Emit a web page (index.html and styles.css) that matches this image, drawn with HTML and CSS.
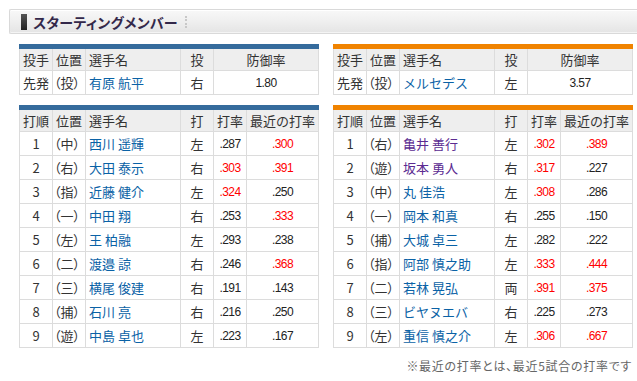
FILE: index.html
```html
<!DOCTYPE html>
<html lang="ja">
<head>
<meta charset="utf-8">
<title>スターティングメンバー</title>
<link rel="stylesheet" href="styles.css">
</head>
<body>
<div class="page">
  <div class="title-bar">
    <span class="title-mark"></span>
    <h2 class="title">スターティングメンバー</h2>
    <span class="title-sep"></span>
  </div>

  <div class="columns">
    <div class="team">
      <table class="tbl tbl-home">
        <colgroup><col class="c33"><col class="c33"><col class="c95"><col class="c33"><col class="c105"></colgroup>
        <tr class="head"><th>投手</th><th>位置</th><th>選手名</th><th class="ctr">投</th><th class="ctr">防御率</th></tr>
        <tr><td>先発</td><td class="pos">（投）</td><td><a class="name">有原 航平</a></td><td class="ctr">右</td><td class="num">1.80</td></tr>
      </table>

      <table class="tbl tbl-home">
        <colgroup><col class="c33"><col class="c33"><col class="c95"><col class="c33"><col class="c33"><col class="c72"></colgroup>
        <tr class="head"><th>打順</th><th>位置</th><th>選手名</th><th class="ctr">打</th><th class="ctr">打率</th><th class="ctr">最近の打率</th></tr>
        <tr><td class="ctr">1</td><td class="pos">（中）</td><td><a class="name">西川 遥輝</a></td><td class="ctr">左</td><td class="num">.287</td><td class="num hot">.300</td></tr>
        <tr><td class="ctr">2</td><td class="pos">（右）</td><td><a class="name">大田 泰示</a></td><td class="ctr">右</td><td class="num hot">.303</td><td class="num hot">.391</td></tr>
        <tr><td class="ctr">3</td><td class="pos">（指）</td><td><a class="name">近藤 健介</a></td><td class="ctr">左</td><td class="num hot">.324</td><td class="num">.250</td></tr>
        <tr><td class="ctr">4</td><td class="pos">（一）</td><td><a class="name">中田 翔</a></td><td class="ctr">右</td><td class="num">.253</td><td class="num hot">.333</td></tr>
        <tr><td class="ctr">5</td><td class="pos">（左）</td><td><a class="name">王 柏融</a></td><td class="ctr">左</td><td class="num">.293</td><td class="num">.238</td></tr>
        <tr><td class="ctr">6</td><td class="pos">（二）</td><td><a class="name">渡邉 諒</a></td><td class="ctr">右</td><td class="num">.246</td><td class="num hot">.368</td></tr>
        <tr><td class="ctr">7</td><td class="pos">（三）</td><td><a class="name">横尾 俊建</a></td><td class="ctr">右</td><td class="num">.191</td><td class="num">.143</td></tr>
        <tr><td class="ctr">8</td><td class="pos">（捕）</td><td><a class="name">石川 亮</a></td><td class="ctr">右</td><td class="num">.216</td><td class="num">.250</td></tr>
        <tr><td class="ctr">9</td><td class="pos">（遊）</td><td><a class="name">中島 卓也</a></td><td class="ctr">左</td><td class="num">.223</td><td class="num">.167</td></tr>
      </table>
    </div>

    <div class="team">
      <table class="tbl tbl-away">
        <colgroup><col class="c33"><col class="c33"><col class="c95"><col class="c33"><col class="c105"></colgroup>
        <tr class="head"><th>投手</th><th>位置</th><th>選手名</th><th class="ctr">投</th><th class="ctr">防御率</th></tr>
        <tr><td>先発</td><td class="pos">（投）</td><td><a class="name">メルセデス</a></td><td class="ctr">左</td><td class="num">3.57</td></tr>
      </table>

      <table class="tbl tbl-away">
        <colgroup><col class="c33"><col class="c33"><col class="c95"><col class="c33"><col class="c33"><col class="c72"></colgroup>
        <tr class="head"><th>打順</th><th>位置</th><th>選手名</th><th class="ctr">打</th><th class="ctr">打率</th><th class="ctr">最近の打率</th></tr>
        <tr><td class="ctr">1</td><td class="pos">（右）</td><td><a class="name visited">亀井 善行</a></td><td class="ctr">左</td><td class="num hot">.302</td><td class="num hot">.389</td></tr>
        <tr><td class="ctr">2</td><td class="pos">（遊）</td><td><a class="name visited">坂本 勇人</a></td><td class="ctr">右</td><td class="num hot">.317</td><td class="num">.227</td></tr>
        <tr><td class="ctr">3</td><td class="pos">（中）</td><td><a class="name">丸 佳浩</a></td><td class="ctr">左</td><td class="num hot">.308</td><td class="num">.286</td></tr>
        <tr><td class="ctr">4</td><td class="pos">（一）</td><td><a class="name">岡本 和真</a></td><td class="ctr">右</td><td class="num">.255</td><td class="num">.150</td></tr>
        <tr><td class="ctr">5</td><td class="pos">（捕）</td><td><a class="name">大城 卓三</a></td><td class="ctr">左</td><td class="num">.282</td><td class="num">.222</td></tr>
        <tr><td class="ctr">6</td><td class="pos">（指）</td><td><a class="name">阿部 慎之助</a></td><td class="ctr">左</td><td class="num hot">.333</td><td class="num hot">.444</td></tr>
        <tr><td class="ctr">7</td><td class="pos">（二）</td><td><a class="name">若林 晃弘</a></td><td class="ctr">両</td><td class="num hot">.391</td><td class="num hot">.375</td></tr>
        <tr><td class="ctr">8</td><td class="pos">（三）</td><td><a class="name">ビヤヌエバ</a></td><td class="ctr">右</td><td class="num">.225</td><td class="num">.273</td></tr>
        <tr><td class="ctr">9</td><td class="pos">（左）</td><td><a class="name">重信 慎之介</a></td><td class="ctr">左</td><td class="num hot">.306</td><td class="num hot">.667</td></tr>
      </table>
      <p class="note">※最近の打率とは、最近5試合の打率です</p>
    </div>
  </div>
</div>
</body>
</html>
```

FILE: styles.css
```css
html, body {
  margin: 0;
  padding: 0;
  overflow: hidden;
  background: #fff;
}
body {
  font-family: "Noto Sans CJK JP", "Noto Sans", sans-serif;
  font-size: 13px;
  color: #333;
}
.page {
  padding: 9px 0 0 9px;
}
.title-bar {
  display: flex;
  align-items: center;
  box-sizing: border-box;
  height: 25px;
  border: 1px solid #d9d9d9;
  border-right: none;
  border-radius: 2px 0 0 2px;
  background: linear-gradient(#f8f8f8 0%, #f0f0f0 45%, #e4e4e4 100%);
  box-shadow: inset 0 1px 0 #fff, inset 0 -1px 0 #f4f4f4;
  padding-left: 11px;
}
.title-mark {
  width: 6px;
  height: 16px;
  background: linear-gradient(#555, #222);
  margin-right: 6px;
}
.title {
  margin: 0;
  font-size: 14px;
  font-weight: bold;
  color: #33284a;
  font-feature-settings: "palt";
  letter-spacing: 0.3px;
}
.title-sep {
  width: 0;
  height: 12px;
  border-left: 2px dotted #c8c8c8;
  margin-left: 7px;
}
.columns {
  display: flex;
  gap: 14px;
  margin: 10px 0 0 10px;
}
.team {
  display: flex;
  flex-direction: column;
  gap: 10px;
  width: 300px;
}
.tbl {
  width: 300px;
  border-collapse: collapse;
  table-layout: fixed;
}
.tbl-home { border-top: 5px solid #356b9c; }
.tbl-away { border-top: 5px solid #f08300; }
.c33 { width: 33px; }
.c95 { width: 95px; }
.c72 { width: 72px; }
.c105 { width: 105px; }
.tbl th, .tbl td {
  border: 1px solid #dcdcdc;
  height: 23px;
  padding: 0 3px;
  font-weight: normal;
  text-align: left;
  white-space: nowrap;
  line-height: 16px;
  box-sizing: border-box;
}
.tbl tr { height: 24px; }
.tbl .head th { background: #eeeeee; color: #333; }
.tbl .ctr { text-align: center; }
.tbl .pos {
  padding: 0 0 0 1px;
  font-feature-settings: "palt";
}
.name {
  color: #0a62a6;
  text-decoration: none;
}
.name.visited { color: #5b2b91; }
.tbl .num {
  text-align: center;
  font-family: "Liberation Sans", sans-serif;
  font-size: 12px;
  letter-spacing: -0.6px;
  color: #222;
}
.tbl .num.hot { color: #ff0000; }
.note {
  margin: 0 1px 0 0;
  text-align: right;
  font-size: 12px;
  color: #666;
  font-feature-settings: "palt";
  letter-spacing: 0.7px;
  line-height: 16px;
}
```
